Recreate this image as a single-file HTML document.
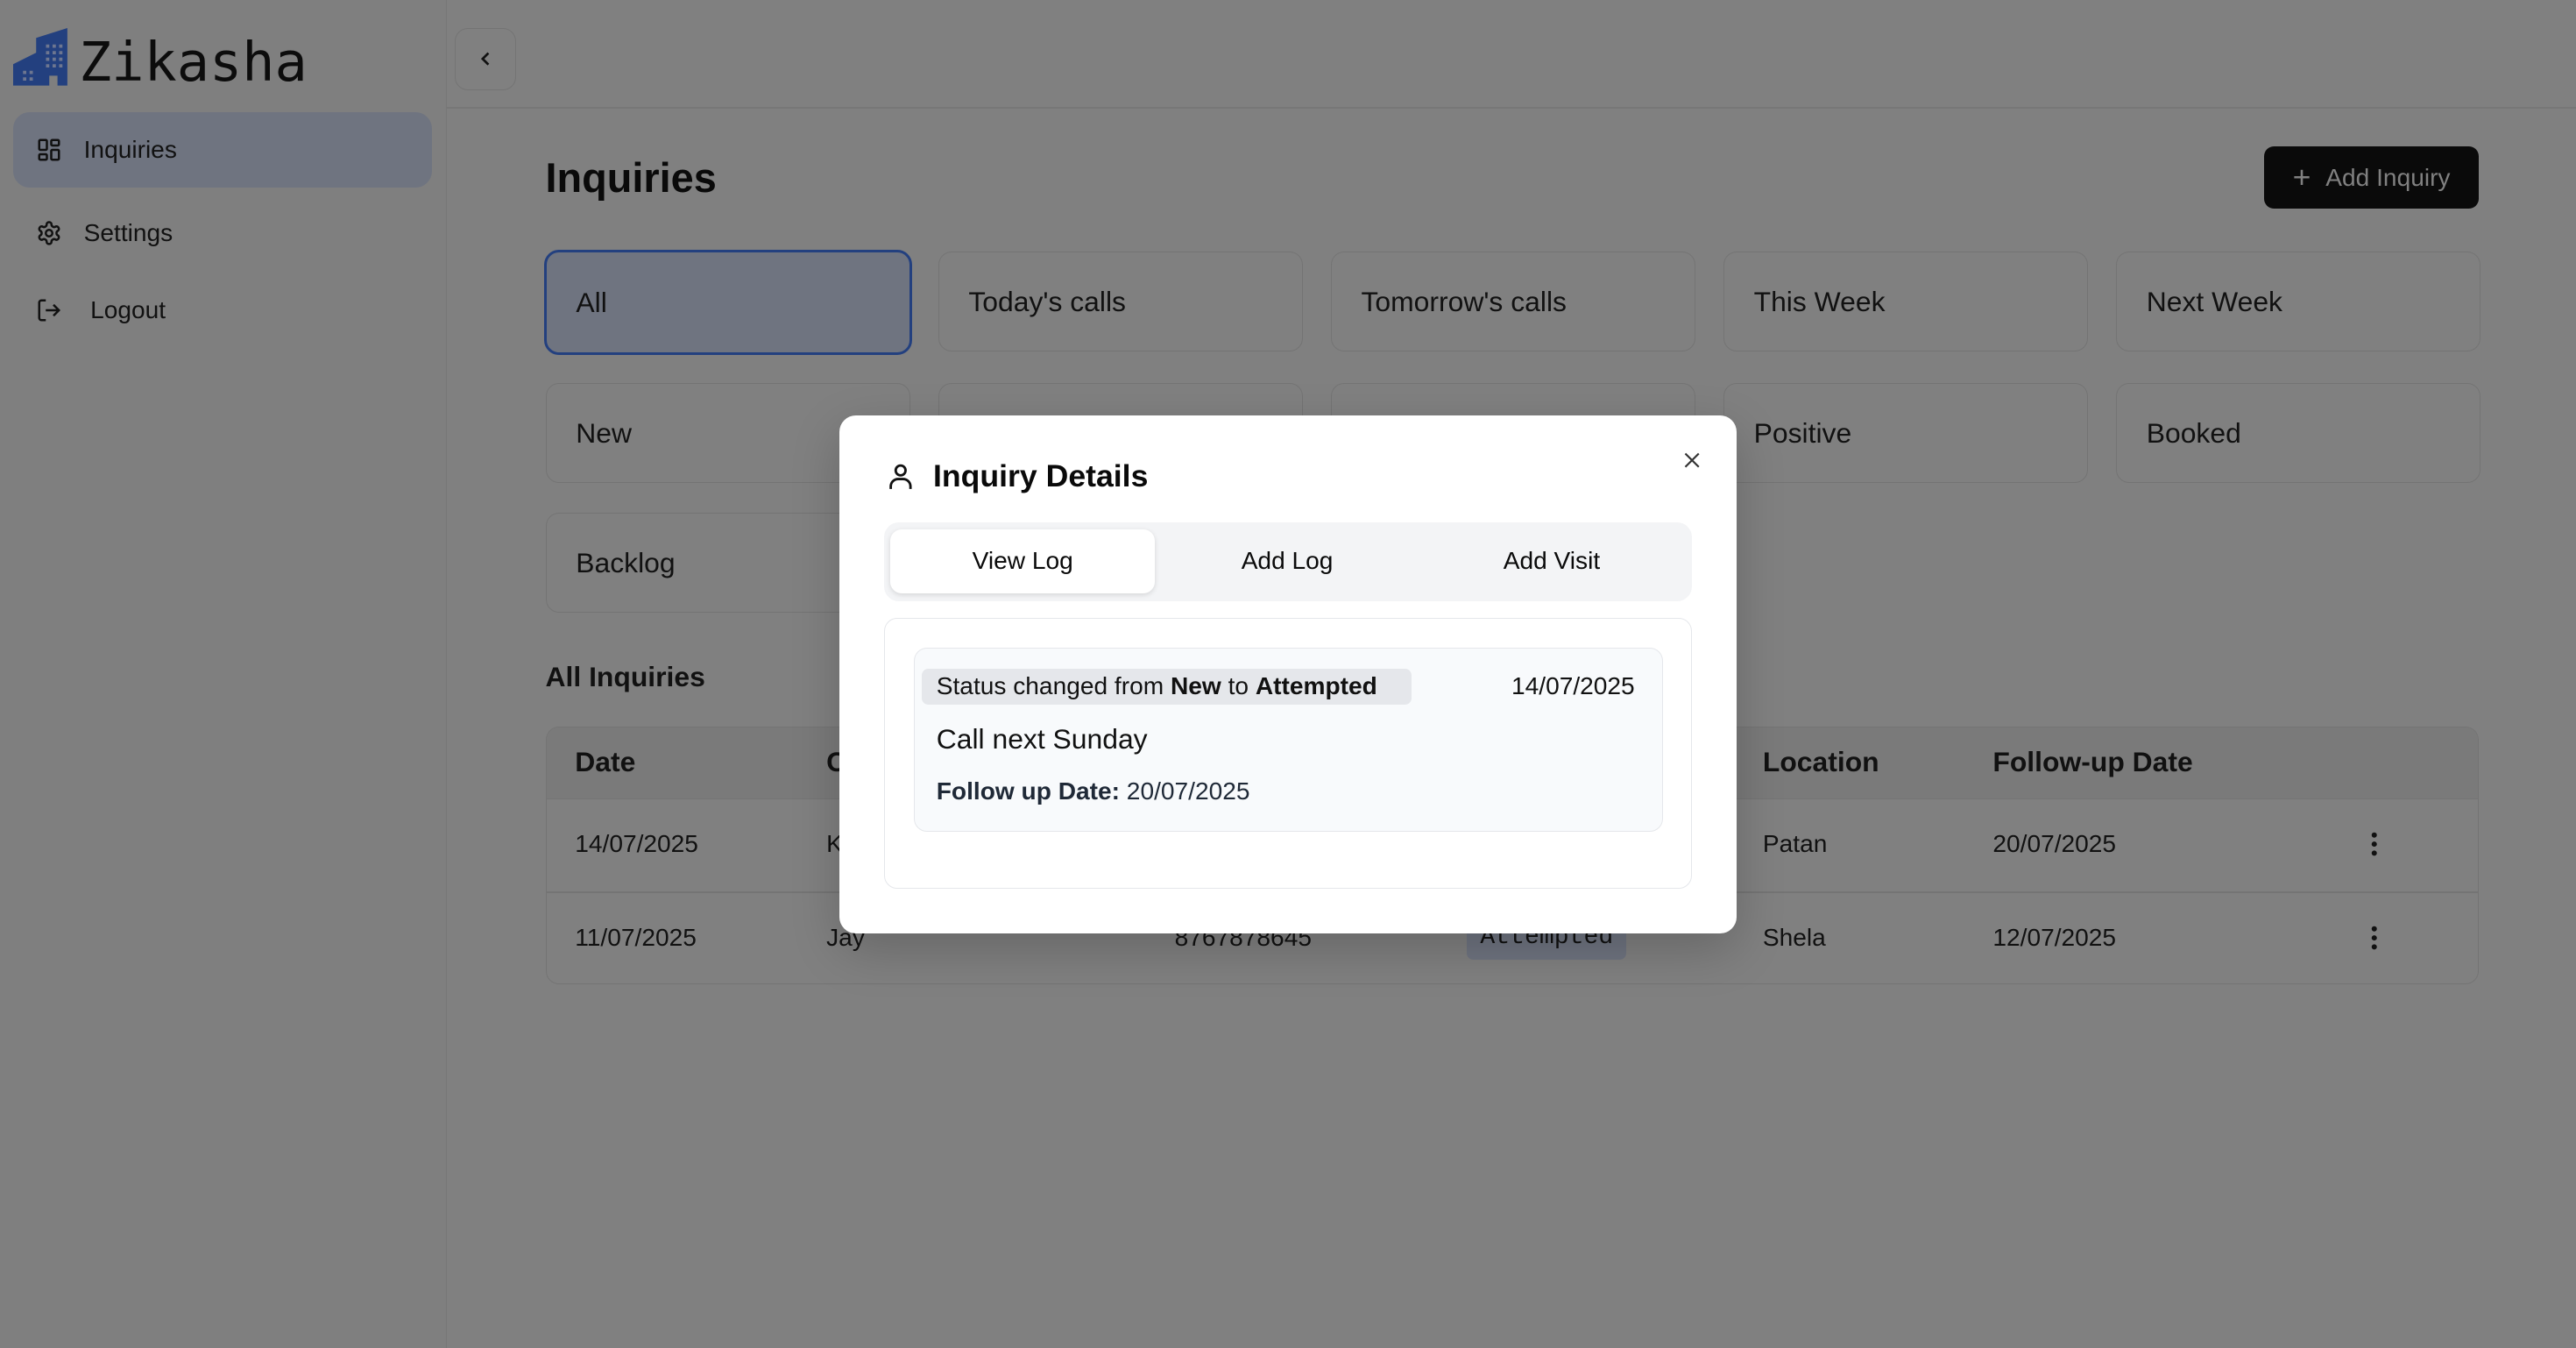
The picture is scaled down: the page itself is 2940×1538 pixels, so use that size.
<!DOCTYPE html>
<html><head><meta charset="utf-8">
<style>
html{zoom:1.875}
*{box-sizing:border-box;margin:0;padding:0}
body{width:1568px;height:820px;background:#808080;font-family:"Liberation Sans",sans-serif;color:#0a0a0a;position:relative;overflow:hidden}
.a{position:absolute}
.side{left:0;top:0;width:272px;height:820px;border-right:1px solid #777;background:#7f7f7f}
.nav{left:8px;width:255px;height:46px;border-radius:10px;display:flex;align-items:center;font-size:15px;color:#111}
.card{width:222px;height:61px;border:1px solid #747474;border-radius:8px;font-size:17px;padding-left:18px;display:flex;align-items:center;color:#111}
.th{font-size:17px;font-weight:bold;color:#111}
.td{font-size:15px;color:#111}
.modal{left:511px;top:253px;width:546px;height:315px;background:#fff;border-radius:10px;box-shadow:0 10px 30px rgba(0,0,0,.2)}
</style></head><body>
<div class="a side"></div>
<svg class="a" style="left:8px;top:17px" width="33" height="35" viewBox="0 0 33 35"><path d="M0 22 L14 15 L14 6 L33 0 L33 35 L27 35 L27 29 L22 29 L22 35 L0 35Z" fill="#23407f"/><g fill="#6d7690"><rect x="20" y="10" width="2" height="2"/><rect x="24" y="10" width="2" height="2"/><rect x="28" y="10" width="2" height="2"/><rect x="20" y="14" width="2" height="2"/><rect x="24" y="14" width="2" height="2"/><rect x="28" y="14" width="2" height="2"/><rect x="20" y="18" width="2" height="2"/><rect x="24" y="18" width="2" height="2"/><rect x="28" y="18" width="2" height="2"/><rect x="20" y="22" width="2" height="2"/><rect x="24" y="22" width="2" height="2"/><rect x="28" y="22" width="2" height="2"/><rect x="6" y="26" width="2" height="2"/><rect x="10" y="26" width="2" height="2"/><rect x="6" y="30" width="2" height="2"/><rect x="10" y="30" width="2" height="2"/></g></svg>
<div class="a" style="left:48px;top:18px;font-family:'DejaVu Sans Mono',monospace;font-size:33px;color:#0c0c0c;line-height:40px">Zikasha</div>
<div class="a nav" style="top:68px;background:#6f7480"><svg style="margin-left:14px" width="16" height="16" viewBox="0 0 24 24" fill="none" stroke="#111" stroke-width="2"><rect x="3" y="3" width="7" height="9" rx="1"/><rect x="14" y="3" width="7" height="5" rx="1"/><rect x="14" y="12" width="7" height="9" rx="1"/><rect x="3" y="16" width="7" height="5" rx="1"/></svg><span style="margin-left:13px">Inquiries</span></div>
<div class="a nav" style="top:119px"><svg style="margin-left:14px" width="16" height="16" viewBox="0 0 24 24" fill="none" stroke="#111" stroke-width="2"><circle cx="12" cy="12" r="3"/><path d="M12.2 2h-.4a2 2 0 0 0-2 2v.2a2 2 0 0 1-1 1.7l-.4.3a2 2 0 0 1-2 0l-.2-.1a2 2 0 0 0-2.7.7l-.2.4a2 2 0 0 0 .7 2.7l.2.1a2 2 0 0 1 1 1.7v.5a2 2 0 0 1-1 1.7l-.2.1a2 2 0 0 0-.7 2.7l.2.4a2 2 0 0 0 2.7.7l.2-.1a2 2 0 0 1 2 0l.4.3a2 2 0 0 1 1 1.7v.2a2 2 0 0 0 2 2h.4a2 2 0 0 0 2-2v-.2a2 2 0 0 1 1-1.7l.4-.3a2 2 0 0 1 2 0l.2.1a2 2 0 0 0 2.7-.7l.2-.4a2 2 0 0 0-.7-2.7l-.2-.1a2 2 0 0 1-1-1.7v-.5a2 2 0 0 1 1-1.700l.2-.1a2 2 0 0 0 .7-2.7l-.2-.4a2 2 0 0 0-2.7-.7l-.2.1a2 2 0 0 1-2 0l-.4-.3a2 2 0 0 1-1-1.7V4a2 2 0 0 0-2-2z"/></svg><span style="margin-left:13px">Settings</span></div>
<div class="a nav" style="top:166px"><svg style="margin-left:14px" width="16" height="16" viewBox="0 0 24 24" fill="none" stroke="#111" stroke-width="2"><path d="M9 21H5a2 2 0 0 1-2-2V5a2 2 0 0 1 2-2h4"/><path d="M16 17l5-5-5-5M21 12H9"/></svg><span style="margin-left:17px">Logout</span></div>
<div class="a" style="left:272px;top:65px;width:1296px;height:1px;background:#777"></div>
<div class="a" style="left:277px;top:17px;width:37px;height:38px;border:1px solid #747474;border-radius:8px;display:flex;align-items:center;justify-content:center"><svg width="14" height="14" viewBox="0 0 24 24" fill="none" stroke="#111" stroke-width="2.5"><path d="M15 18l-6-6 6-6"/></svg></div>
<div class="a" style="left:332px;top:94px;font-size:25px;font-weight:bold">Inquiries</div>
<div class="a" style="left:1378px;top:89px;width:131px;height:38px;background:#0a0a0a;border-radius:6px;color:#808080;font-size:15px;display:flex;align-items:center;justify-content:center"><span style="font-size:19px;margin-right:9px">+</span>Add Inquiry</div>
<div class="a card" style="left:331px;top:152px;width:224px;height:64px;border:2px solid #23407f;background:#6f7480;border-radius:9px">All</div>
<div class="a card" style="left:571px;top:153px">Today's calls</div>
<div class="a card" style="left:810px;top:153px">Tomorrow's calls</div>
<div class="a card" style="left:1049px;top:153px">This Week</div>
<div class="a card" style="left:1288px;top:153px">Next Week</div>
<div class="a card" style="left:332px;top:233px">New</div>
<div class="a card" style="left:571px;top:233px"></div>
<div class="a card" style="left:810px;top:233px"></div>
<div class="a card" style="left:1049px;top:233px">Positive</div>
<div class="a card" style="left:1288px;top:233px">Booked</div>
<div class="a card" style="left:332px;top:312px">Backlog</div>
<div class="a" style="left:332px;top:402px;font-size:17px;font-weight:bold;color:#111">All Inquiries</div>
<div class="a" style="left:332px;top:442px;width:1177px;height:157px;border:1px solid #747474;border-radius:8px;overflow:hidden">
<div class="a" style="left:0;top:0;width:100%;height:44px;background:#7a7a7a;border-bottom:1px solid #747474"></div>
<div class="a" style="left:0;top:100px;width:100%;height:1px;background:#747474"></div>
</div>
<div class="a th" style="left:350px;top:454px">Date</div>
<div class="a th" style="left:503px;top:454px">C</div>
<div class="a th" style="left:1073px;top:454px">Location</div>
<div class="a th" style="left:1213px;top:454px">Follow-up Date</div>
<div class="a td" style="left:350px;top:505px">14/07/2025</div>
<div class="a td" style="left:503px;top:505px">K</div>
<div class="a td" style="left:1073px;top:505px">Patan</div>
<div class="a td" style="left:1213px;top:505px">20/07/2025</div>
<div class="a td" style="left:350px;top:562px">11/07/2025</div>
<div class="a td" style="left:503px;top:562px">Jay</div>
<div class="a td" style="left:715px;top:562px">8767878645</div>
<div class="a" style="left:893px;top:560px;width:97px;height:24px;background:#6f7480;border-radius:4px"></div>
<div class="a td" style="left:901px;top:562px;font-family:'Liberation Mono',monospace">Attempted</div>
<div class="a td" style="left:1073px;top:562px">Shela</div>
<div class="a td" style="left:1213px;top:562px">12/07/2025</div>
<svg class="a" style="left:1443px;top:506px" width="4" height="15"><circle cx="2" cy="2" r="1.6" fill="#111"/><circle cx="2" cy="7.5" r="1.6" fill="#111"/><circle cx="2" cy="13" r="1.6" fill="#111"/></svg>
<svg class="a" style="left:1443px;top:563px" width="4" height="15"><circle cx="2" cy="2" r="1.6" fill="#111"/><circle cx="2" cy="7.5" r="1.6" fill="#111"/><circle cx="2" cy="13" r="1.6" fill="#111"/></svg>

<div class="a modal">
<svg class="a" style="left:28px;top:27px" width="18" height="20" viewBox="0 0 24 24" fill="none" stroke="#111" stroke-width="2"><circle cx="12" cy="7" r="4"/><path d="M4 22v-2a6 6 0 0 1 6-6h4a6 6 0 0 1 6 6v2"/></svg>
<div class="a" style="left:57px;top:26px;font-size:19px;font-weight:bold">Inquiry Details</div>
<svg class="a" style="left:512px;top:20px" width="14" height="14" viewBox="0 0 24 24" fill="none" stroke="#333" stroke-width="2"><path d="M5 5l14 14M19 5L5 19"/></svg>
<div class="a" style="left:27px;top:65px;width:492px;height:48px;background:#f3f4f6;border-radius:9px"></div>
<div class="a" style="left:31px;top:69px;width:161px;height:39px;background:#fff;border-radius:7px;box-shadow:0 1px 3px rgba(0,0,0,.12)"></div>
<div class="a" style="left:31px;top:80px;width:161px;text-align:center;font-size:15px">View Log</div>
<div class="a" style="left:192px;top:80px;width:161px;text-align:center;font-size:15px">Add Log</div>
<div class="a" style="left:353px;top:80px;width:161px;text-align:center;font-size:15px">Add Visit</div>
<div class="a" style="left:27px;top:123px;width:492px;height:165px;border:1px solid #e5e7eb;border-radius:8px"></div>
<div class="a" style="left:45px;top:141px;width:456px;height:112px;border:1px solid #e5e7eb;border-radius:8px;background:#f8fafc"></div>
<div class="a" style="left:50px;top:154px;width:298px;height:22px;background:#e5e7eb;border-radius:4px"></div>
<div class="a" style="left:59px;top:156px;font-size:15px;color:#111">Status changed from <b>New</b> to <b>Attempted</b></div>
<div class="a" style="left:409px;top:156px;font-size:15px;color:#111">14/07/2025</div>
<div class="a" style="left:59px;top:187px;font-size:17px;color:#111">Call next Sunday</div>
<div class="a" style="left:59px;top:220px;font-size:15px;color:#1f2937"><b>Follow up Date:</b> 20/07/2025</div>
</div>
</body></html>
